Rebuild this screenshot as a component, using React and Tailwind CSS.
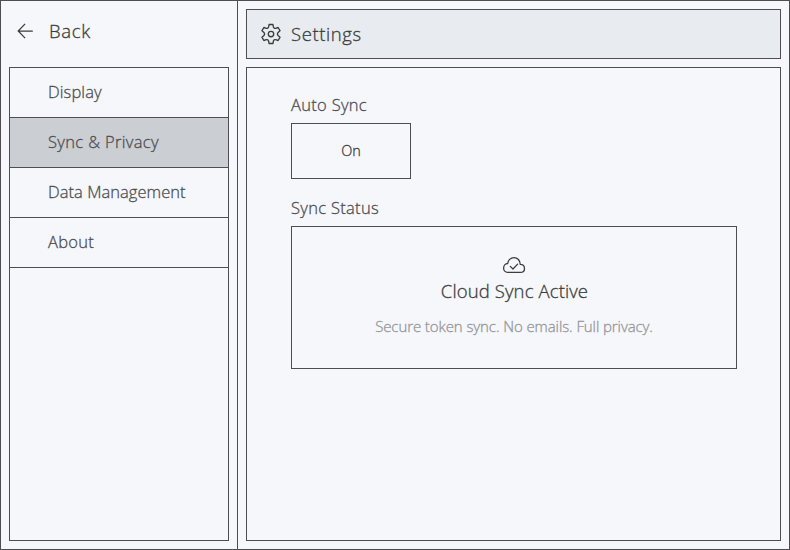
const BORDER = 'border-[#4e4e52]';

function ArrowLeftIcon() {
  return (
    <svg width="18" height="18" viewBox="0 0 18 18" fill="none" stroke="#3c3c3c" strokeWidth="1.25">
      <path d="M9.1 1.900 2.200 9l6.900 7.100M2.500 9h14.300" />
    </svg>
  );
}

function GearIcon() {
  return (
    <svg width="22" height="22" viewBox="0 0 22 22" fill="none" stroke="#3c3c3c" strokeWidth="1.35" strokeLinejoin="round">
      <path d="M9.1 1.500h3.800l.5 2.400c.3 1.200 1.200 1.700 2.300 1.400l2.400-.8 1.900 3.200-1.900 1.700c-.9.900-.9 2.300 0 3.200l1.900 1.700-1.900 3.200-2.400-.8c-1.100-.3-2 .2-2.300 1.400l-.5 2.400H9.100l-.5-2.400c-.3-1.200-1.200-1.700-2.300-1.400l-2.400.8L2 14.300l1.900-1.700c.9-.9.900-2.300 0-3.200L2 7.700l1.900-3.200 2.400.8c1.100.3 2-.2 2.300-1.400z" />
      <circle cx="11" cy="11" r="2.700" />
    </svg>
  );
}

function CloudCheckIcon() {
  return (
    <svg width="24" height="18" viewBox="0 0 24 18" fill="none" stroke="#3c3c3c" strokeWidth="1.3" strokeLinecap="round" strokeLinejoin="round">
      <path d="M5.6 16.400h12.800c2.300 0 4.100-1.600 4.100-4 0-2.300-1.700-4.100-4.300-4.100 0-4-2.700-6.700-6.200-6.700S5.900 4.300 5.700 7.500C3.300 7.500 1.600 9.500 1.600 12c0 2.500 1.700 4.400 4 4.400z" />
      <path d="m8.300 10.400 2.700 2.600 4.600-4.900" />
    </svg>
  );
}

const items = [
  { label: 'Display', tracking: 'tracking-[0.12px]' },
  { label: 'Sync & Privacy', tracking: 'tracking-[0.35px]' },
  { label: 'Data Management', tracking: 'tracking-[0.05px]' },
  { label: 'About', tracking: 'tracking-[0.3px]' },
];

export default function App() {
  return (
    <div className={`flex h-[550px] w-[790px] border ${BORDER} bg-[#f5f7fb] font-['Open_Sans',sans-serif] font-light text-[#3c3c3c] [-webkit-text-stroke:0.3px]`}>
      <aside className={`flex w-[237px] shrink-0 flex-col border-r ${BORDER} p-2`}>
        <button className="flex h-[50px] shrink-0 items-center pb-[6px] pl-[7px] text-left">
          <ArrowLeftIcon />
          <span className="ml-[15px] text-[18.5px] leading-6 tracking-[0.7px]">Back</span>
        </button>
        <nav className={`mt-2 flex-1 border ${BORDER} text-[16.5px] text-[#4e4e52]`}>
          {items.map(({ label, tracking }) => (
            <div key={label} className={`flex h-[50px] items-center border-b ${BORDER} pb-[2px] pl-[38px] leading-6 ${tracking} ${label === 'Sync & Privacy' ? 'bg-[#cbced2]' : ''}`}>
              <span>{label}</span>
            </div>
          ))}
        </nav>
      </aside>
      <main className="flex flex-1 flex-col gap-2 p-2">
        <header className={`flex h-[50px] shrink-0 items-center border ${BORDER} bg-[#e8ecf0] pl-[13px]`}>
          <GearIcon />
          <h1 className="ml-[9px] text-[18.5px] leading-6 tracking-[0.6px]">Settings</h1>
        </header>
        <section className={`flex-1 border ${BORDER} pt-[25px] pl-[44px]`}>
          <h2 className="h-[30px] text-[16.5px] leading-6 tracking-[0.3px] text-[#4e4e52]">Auto Sync</h2>
          <button className={`flex h-[56px] w-[120px] items-center justify-center border ${BORDER} text-[14.5px]`}>On</button>
          <h2 className="mt-[17px] h-[30px] text-[16.5px] leading-6 tracking-[0.3px] text-[#4e4e52]">Sync Status</h2>
          <div className={`flex h-[143px] w-[446px] flex-col items-center border ${BORDER} pt-[29px]`}>
            <CloudCheckIcon />
            <p className="mt-[5px] pl-px text-[18.5px] leading-6 tracking-[0.12px]">Cloud Sync Active</p>
            <p className="mt-[13px] text-[15px] leading-5 tracking-[-0.09px] text-[#95969a]">Secure token sync. No emails. Full privacy.</p>
          </div>
        </section>
      </main>
    </div>
  );
}
